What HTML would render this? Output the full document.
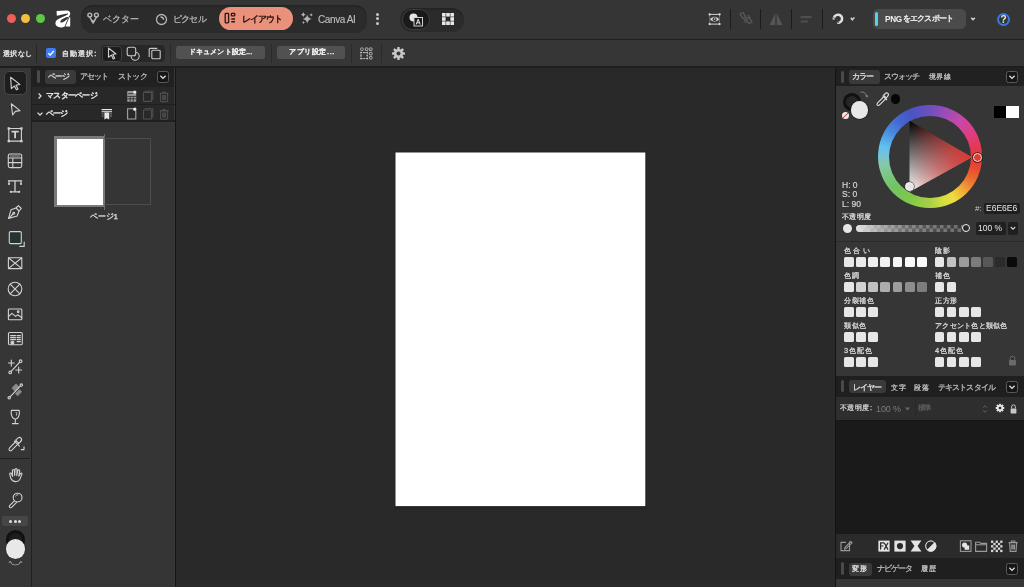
<!DOCTYPE html>
<html lang="ja"><head><meta charset="utf-8">
<style>
*{box-sizing:border-box;margin:0;padding:0}
html,body{width:1024px;height:587px;overflow:hidden;background:#2a2a2a;font-family:"Liberation Sans",sans-serif;color:#d8d8d8}
.a{position:absolute}
.t{position:absolute;white-space:nowrap;line-height:1}
.j{-webkit-text-stroke:0.2px currentColor}
.t{will-change:transform}
</style></head><body>
<!-- top bar -->
<div class="a" style="left:0;top:0;width:1024px;height:39px;background:#353535"></div>
<div class="a" style="left:0;top:39px;width:1024px;height:1px;background:#1f1f1f"></div>
<div class="a" style="left:0;top:40px;width:1024px;height:26px;background:#363636"></div>
<div class="a" style="left:0;top:66px;width:1024px;height:1.6px;background:#1e1e1e"></div>
<!-- traffic -->
<div class="a" style="left:7px;top:14px;width:9px;height:9px;border-radius:50%;background:#ee5f57"></div>
<div class="a" style="left:21px;top:14px;width:9px;height:9px;border-radius:50%;background:#f5bd3f"></div>
<div class="a" style="left:35.5px;top:14px;width:9px;height:9px;border-radius:50%;background:#5fc648"></div>
<!-- logo -->
<svg class="a" style="left:54px;top:8px" width="20" height="22" viewBox="0 0 20 22">
<path fill="#ffffff" fill-rule="evenodd" d="M2.6,3.1 L12.4,2.5 C14.9,2.4 16.5,3.8 16.2,5.8 C16.1,7 15.4,8.2 14.6,9 L10.6,18.4 C9.6,19.1 8.4,19.4 7,19.4 C3.6,19.2 1.4,17.6 1.4,15.2 C1.4,13 3,11.6 5,10.8 C8,9.4 11.6,7.8 13.6,6.6 C14.3,6.1 14.2,5.4 13.4,5.5 C10.4,5.9 6,7 2.8,7.8 Z M6.6,14.4 C5.6,13.4 7.4,11.4 10,10.2 C12,9.2 13.8,8.8 14.2,9.2 C14.4,9.8 12.8,11.8 10.6,13.2 C8.8,14.3 7.2,14.9 6.6,14.4 Z"/>
<path fill="#ffffff" d="M15.4,9.2 L16.2,9.2 L16.2,18.6 L11.4,18.6 Z"/>
</svg>
<!-- mode group -->
<div class="a" style="left:81px;top:5px;width:286px;height:28px;border-radius:12px;background:#2b2b2b;box-shadow:inset 0 1.5px 1px rgba(0,0,0,0.18)"></div>
<svg class="a" style="left:86px;top:11px" width="14" height="14" viewBox="0 0 14 14" fill="none" stroke="#b8b8b8" stroke-width="1.4">
<circle cx="3.8" cy="4" r="1.9"/><circle cx="10.4" cy="4" r="1.9"/>
<path d="M3.6,5.9 L6.2,10.4 M10.6,5.9 L8,10.4"/><path d="M5.4,9.8 H8.8 L7.1,12.6 Z" fill="#b8b8b8" stroke-width="0.9" stroke-linejoin="round"/>
</svg>
<div class="t j" style="left:103px;top:14.7px;font-size:8.5px;color:#b4b4b4;letter-spacing:-0.04px;-webkit-text-stroke:0.25px currentColor">ベクター</div>
<svg class="a" style="left:155px;top:13px" width="13" height="13" viewBox="0 0 13 13" fill="none" stroke="#b4b4b4" stroke-width="1.3">
<circle cx="6.5" cy="6.5" r="5"/><path d="M5.5,4 C7,4 8.5,5 8.5,6.8" stroke-width="1.4"/>
</svg>
<div class="t j" style="left:173px;top:14.7px;font-size:8.5px;color:#b4b4b4;letter-spacing:-0.77px;-webkit-text-stroke:0.25px currentColor">ピクセル</div>
<div class="a" style="left:219px;top:7px;width:74px;height:23px;border-radius:11.5px;background:#e9917b"></div>
<svg class="a" style="left:223px;top:12px" width="14" height="12" viewBox="0 0 14 12" fill="none" stroke="#2a1612" stroke-width="1.3">
<rect x="2.2" y="1.3" width="3.4" height="9.6" rx="0.8"/><rect x="8.4" y="1.3" width="3.4" height="2.6" rx="0.6"/>
<path d="M8.3,7 H12 M8.3,9.8 H12" stroke-width="1.4"/>
</svg>
<div class="t j" style="left:242px;top:14.7px;font-size:8.5px;color:#2a1612;-webkit-text-stroke:0.45px currentColor;letter-spacing:-0.9px">レイアウト</div>
<svg class="a" style="left:296px;top:8px" width="20" height="22" viewBox="0 0 20 22" fill="#b2b2b2"><path d="M11.2,6.6 Q11.991999999999999,10.208 15.6,11 Q11.991999999999999,11.792 11.2,15.4 Q10.408,11.792 6.799999999999999,11 Q10.408,10.208 11.2,6.6 Z"/><path d="M7.3,4.300000000000001 Q7.732,6.268 9.7,6.7 Q7.732,7.132000000000001 7.3,9.1 Q6.867999999999999,7.132000000000001 4.9,6.7 Q6.867999999999999,6.268 7.3,4.300000000000001 Z"/><path d="M15.2,5.2 Q15.505999999999998,6.594 16.9,6.9 Q15.505999999999998,7.206 15.2,8.6 Q14.894,7.206 13.5,6.9 Q14.894,6.594 15.2,5.2 Z"/><path d="M7.5,13.1 Q7.77,14.33 9.0,14.6 Q7.77,14.87 7.5,16.1 Q7.23,14.87 6.0,14.6 Q7.23,14.33 7.5,13.1 Z"/></svg>
<div class="t" style="left:318px;top:14.5px;font-size:10px;color:#bcbcbc;letter-spacing:-0.4px;-webkit-text-stroke:0.15px currentColor">Canva AI</div>
<!-- more dots -->
<div class="a" style="left:376px;top:12.5px;width:3px;height:3px;border-radius:50%;background:#c8c8c8"></div>
<div class="a" style="left:376px;top:17px;width:3px;height:3px;border-radius:50%;background:#c8c8c8"></div>
<div class="a" style="left:376px;top:21.5px;width:3px;height:3px;border-radius:50%;background:#c8c8c8"></div>
<!-- group 2 -->
<div class="a" style="left:400px;top:7.5px;width:64px;height:24px;border-radius:12px;background:#2b2b2b;box-shadow:inset 0 1.5px 1px rgba(0,0,0,0.18)"></div>
<div class="a" style="left:401.5px;top:9px;width:28px;height:21px;border-radius:10.5px;background:#1a1a1a;border:1px solid #3e3e3e"></div>
<svg class="a" style="left:407px;top:11px" width="18" height="18" viewBox="0 0 18 18">
<circle cx="6.5" cy="6.5" r="4" fill="#e6e6e6"/><rect x="7" y="6.5" width="8.5" height="8.5" fill="#1a1a1a" stroke="#cfcfcf" stroke-width="1"/>
<path d="M9.2,13.5 L11.2,8.2 L13.2,13.5 M9.9,11.8 H12.5" fill="none" stroke="#e6e6e6" stroke-width="1"/>
</svg>
<svg class="a" style="left:441px;top:12px" width="14" height="14" viewBox="0 0 14 14" fill="#e8e8e8">
<rect x="1" y="1" width="3.6" height="3.6"/><rect x="5.2" y="1" width="3.6" height="3.6"/><rect x="9.4" y="1" width="3.6" height="3.6"/>
<rect x="1" y="5.2" width="3.6" height="3.6"/><rect x="9.4" y="5.2" width="3.6" height="3.6"/>
<rect x="1" y="9.4" width="3.6" height="3.6"/><rect x="5.2" y="9.4" width="3.6" height="3.6"/><rect x="9.4" y="9.4" width="3.6" height="3.6"/>
</svg>
<!-- right icons -->
<svg class="a" style="left:704px;top:11px" width="18" height="16" viewBox="0 0 18 16" fill="none" stroke="#d4d4d4" stroke-width="1">
<path d="M5.2,3.4 H16 M5.2,13.1 H16"/><path d="M5.7,3.4 V13.1 M15.5,3.4 V13.1" stroke="#7a7a7a" stroke-width="0.8"/>
<g fill="#dcdcdc" stroke="none"><circle cx="5.6" cy="3.4" r="1.1"/><circle cx="15.6" cy="3.4" r="1.1"/><circle cx="5.6" cy="13.1" r="1.1"/><circle cx="15.6" cy="13.1" r="1.1"/></g>
<path d="M5.4,8.2 Q10.6,2.8 15.8,8.2 Q10.6,13.6 5.4,8.2 Z" fill="#dcdcdc" stroke="#363636" stroke-width="0.6"/>
<circle cx="10.6" cy="8.2" r="2" fill="#363636" stroke="none"/><circle cx="10.7" cy="8" r="0.8" fill="#dcdcdc" stroke="none"/>
</svg>
<div class="a" style="left:730px;top:9px;width:1px;height:20px;background:#1c1c1c"></div>
<svg class="a" style="left:738px;top:11px" width="16" height="16" viewBox="0 0 16 16" fill="none" stroke="#5a5a5a" stroke-width="1.3">
<path d="M2,3 L5,1.5 L8,6 L5,7.5 Z"/><path d="M8,8 L11,6.5 L14,11 L11,12.5 Z"/><path d="M6,8 L8,12 M10,4 L12,7"/>
</svg>
<div class="a" style="left:760px;top:9px;width:1px;height:20px;background:#1c1c1c"></div>
<svg class="a" style="left:768px;top:11px" width="16" height="16" viewBox="0 0 16 16" fill="#555">
<path d="M7.3,2 L7.3,14 L1.5,14 Z"/><path d="M8.7,2 L8.7,14 L14.5,14 Z"/>
</svg>
<div class="a" style="left:791px;top:9px;width:1px;height:20px;background:#1c1c1c"></div>
<svg class="a" style="left:799px;top:12px" width="14" height="14" viewBox="0 0 14 14" fill="#4e4e4e"><rect x="1.6" y="4" width="11" height="2.2" rx="0.4"/><rect x="1.6" y="8.4" width="7.4" height="2.2" rx="0.4"/></svg>
<div class="a" style="left:822px;top:9px;width:1px;height:20px;background:#1c1c1c"></div>
<svg class="a" style="left:826px;top:8px" width="20" height="22" viewBox="826 8 20 22" fill="none">
<path d="M834,19.6 A4.1,4.1 0 1 1 837.4,22.8" stroke="#e0e0e0" stroke-width="2.5"/>
<path d="M833.2,17.6 L835.6,18.8 M837.6,20.4 L838.6,23" stroke="#363636" stroke-width="0.8"/>
</svg>
<svg class="a" style="left:849px;top:16px" width="8" height="6" viewBox="0 0 8 6" fill="none" stroke="#d8d8d8" stroke-width="1.4"><path d="M1.8,1.8 L3.4,3.8 L5.4,1.4"/></svg>
<!-- export -->
<div class="a" style="left:873px;top:9px;width:93px;height:20px;border-radius:5px;background:#4b4b4b"></div>
<div class="a" style="left:875px;top:12px;width:3px;height:14px;border-radius:1.5px;background:#4fd6ea"></div>
<div class="t" style="left:884.6px;top:15.6px;font-size:8.2px;color:#f0f0f0;font-weight:bold;letter-spacing:-0.3px">PNG</div><div class="t j" style="left:902.5px;top:15.2px;font-size:8px;letter-spacing:-0.85px;color:#f0f0f0;-webkit-text-stroke:0.35px currentColor">をエクスポート</div>
<svg class="a" style="left:969px;top:16px" width="8" height="6" viewBox="0 0 8 6" fill="none" stroke="#d8d8d8" stroke-width="1.4"><path d="M2.2,1.8 L4,3.8 L5.8,1.8"/></svg>
<div class="a" style="left:996.5px;top:12.5px;width:13.5px;height:13.5px;border-radius:50%;border:2px solid #3b78d8"></div>
<div class="t" style="left:999px;top:14.5px;width:9px;text-align:center;font-size:10px;font-weight:bold;color:#e8e8e8">?</div>

<!-- second bar -->
<div class="t j" style="left:3px;top:50.4px;font-size:7.4px;letter-spacing:0.46px;color:#e2e2e2;-webkit-text-stroke:0.35px currentColor">選択なし</div>
<div class="a" style="left:36px;top:44px;width:1px;height:19px;background:#262626"></div>
<div class="a" style="left:46px;top:48px;width:10.3px;height:10.3px;border-radius:2px;background:#3b7ef2"></div>
<svg class="a" style="left:46px;top:48px" width="10" height="10" viewBox="0 0 10 10" fill="none" stroke="#fff" stroke-width="1.4"><path d="M2.4,5.2 L4.2,7 L7.8,3"/></svg>
<div class="t j" style="left:61.5px;top:50.4px;font-size:7.4px;letter-spacing:1.06px;color:#e2e2e2;-webkit-text-stroke:0.35px currentColor">自動選択:</div>
<div class="a" style="left:101px;top:45px;width:64px;height:17px;border-radius:4px;background:#272727"></div>
<div class="a" style="left:102px;top:45.5px;width:20px;height:16px;border-radius:3.5px;background:#1c1c1c;border:1px solid #444"></div>
<svg class="a" style="left:106px;top:46px" width="13" height="15" viewBox="0 0 13 15" fill="none" stroke="#d0d0d0" stroke-width="1.1" stroke-linejoin="round">
<path d="M2.5,2 L10,8 L6.8,8.3 L8.6,12.2 L7.2,12.9 L5.4,9.1 L2.5,11.2 Z"/>
</svg>
<svg class="a" style="left:126px;top:46px" width="14" height="15" viewBox="0 0 14 15" fill="none" stroke="#c8c8c8" stroke-width="1.1">
<rect x="1.2" y="1.3" width="8.5" height="8.5" rx="2"/><path d="M9.7,6.3 A4,4 0 1 1 5.2,9.8"/>
</svg>
<svg class="a" style="left:147px;top:47px" width="15" height="14" viewBox="0 0 15 14" fill="none" stroke="#c8c8c8" stroke-width="1.1">
<path d="M2.2,10 V2.5 Q2.2,1.4 3.3,1.4 H10.3"/><rect x="4.8" y="3.3" width="8.4" height="8.4" rx="1"/>
</svg>
<div class="a" style="left:170px;top:44px;width:1px;height:19px;background:#2a2a2a"></div><div class="a" style="left:271px;top:44px;width:1px;height:19px;background:#2a2a2a"></div><div class="a" style="left:351px;top:44px;width:1px;height:19px;background:#2a2a2a"></div><div class="a" style="left:381px;top:44px;width:1px;height:19px;background:#2a2a2a"></div>
<div class="a" style="left:176px;top:46px;width:89px;height:13px;border-radius:2.5px;background:#515151"></div>
<div class="t j" style="left:189px;top:48.4px;font-size:7.4px;letter-spacing:0.11px;color:#f2f2f2;-webkit-text-stroke:0.45px currentColor">ドキュメント設定...</div>
<div class="a" style="left:277px;top:46px;width:68px;height:13px;border-radius:2.5px;background:#515151"></div>
<div class="t j" style="left:289px;top:48.4px;font-size:7.4px;letter-spacing:0.6px;color:#f2f2f2;-webkit-text-stroke:0.45px currentColor">アプリ設定...</div>
<svg class="a" style="left:354px;top:42px" width="24" height="22" viewBox="0 0 24 22" fill="none" stroke="#bdbdbd" stroke-width="0.9">
<rect x="6.6" y="5.9" width="2.6" height="2.6" rx="0.8"/><rect x="11.3" y="5.9" width="2.6" height="2.6" rx="0.5"/><rect x="15.4" y="5.9" width="2.6" height="2.6" rx="0.5"/>
<rect x="15.4" y="10.3" width="2.6" height="2.6" rx="0.5"/><rect x="15.4" y="14.4" width="2.6" height="2.6" rx="0.5"/>
<rect x="7" y="10.6" width="6.2" height="6" stroke-dasharray="1.1 0.9"/>
<g fill="#d8d8d8" stroke="none"><circle cx="7" cy="10.6" r="0.8"/><circle cx="13.2" cy="10.6" r="0.8"/><circle cx="7" cy="16.6" r="0.8"/><circle cx="13.2" cy="16.6" r="0.8"/><circle cx="10.1" cy="10.6" r="0.7"/><circle cx="10.1" cy="16.6" r="0.7"/><circle cx="7" cy="13.6" r="0.7"/><circle cx="13.2" cy="13.6" r="0.7"/></g>
</svg>
<svg class="a" style="left:391px;top:46px" width="15" height="15" viewBox="0 0 15 15">
<g fill="#c8c8c8"><circle cx="7.5" cy="7.5" r="4.6"/>
<rect x="6.3" y="1" width="2.4" height="13" rx="0.6"/><rect x="6.3" y="1" width="2.4" height="13" rx="0.6" transform="rotate(45 7.5 7.5)"/>
<rect x="6.3" y="1" width="2.4" height="13" rx="0.6" transform="rotate(90 7.5 7.5)"/><rect x="6.3" y="1" width="2.4" height="13" rx="0.6" transform="rotate(135 7.5 7.5)"/></g>
<circle cx="7.5" cy="7.5" r="2" fill="#363636"/>
</svg>

<!-- tool column -->
<div class="a" style="left:0;top:67.6px;width:31px;height:520px;background:#363636"></div>
<div class="a" style="left:31px;top:67.6px;width:1px;height:520px;background:#202020"></div>
<!-- tools -->
<div class="a" style="left:4px;top:71.3px;width:23.2px;height:24px;border-radius:5px;background:#1e1e1e;border:1px solid #474747"></div>
<svg class="a" style="left:0;top:67px" width="31" height="400" viewBox="0 0 31 400" fill="none" stroke="#d2d2d2" stroke-width="1.1" stroke-linejoin="round" stroke-linecap="round">
<!-- move arrow y~84 -->
<path d="M10.6,10.3 L19.9,17.4 L16,18.2 L18,22 L16.4,22.8 L14.4,19 L11.4,21.6 Z"/>
<!-- node arrow y~109 -->
<path d="M11.3,36.8 L20,43.6 L15.4,44.4 L12.6,48 Z"/>
<!-- T box y~134.5 -->
<rect x="8.8" y="61.5" width="12.6" height="12.6"/>
<path d="M11.5,64.6 H18.7 M15.1,64.6 V71.2" stroke-width="1.8" stroke-linecap="butt"/>
<g fill="#d2d2d2" stroke="none"><rect x="7.6" y="60.3" width="2.4" height="2.4"/><rect x="20.2" y="60.3" width="2.4" height="2.4"/><rect x="7.6" y="72.9" width="2.4" height="2.4"/><rect x="20.2" y="72.9" width="2.4" height="2.4"/></g>
<!-- table y~160 -->
<rect x="8.3" y="87" width="13.4" height="13.6" rx="1.8"/>
<path d="M8.3,91 H21.7 M8.3,95.6 H21.7 M12.8,91 V100.6"/>
<path d="M10.4,89 H19.6" stroke-width="1" stroke="#9a9a9a"/>
<!-- T frame y~186 -->
<path d="M8.4,113.8 H21.6 M15,113.8 V124.6 M11,124.8 H19" stroke-width="1.3"/>
<path d="M9,113.8 V116.4 M21,113.8 V116.4"/>
<g fill="#d2d2d2" stroke="none"><circle cx="9" cy="117" r="1.1"/><circle cx="21" cy="117" r="1.1"/><circle cx="10.8" cy="124.8" r="1.1"/><circle cx="19.2" cy="124.8" r="1.1"/></g>
<!-- pen y~212 -->
<path d="M21.3,141.5 L18.4,138.6 L16,141 L11,142.8 L8.6,151.4 L17.2,149 L19,144 Z"/>
<path d="M8.6,151.4 L13,147 M16,141 L19,144"/>
<circle cx="13.8" cy="146.2" r="0.9"/>
<!-- square y~237 -->
<rect x="9.3" y="164.6" width="12" height="12" rx="1.2" fill="#263335"/>
<path d="M24.2,175 V179.4 H19.8"/>
<!-- x box y~263 -->
<rect x="8.4" y="190.8" width="13.4" height="10.8" rx="0.8"/><path d="M8.4,190.8 L21.8,201.6 M21.8,190.8 L8.4,201.6"/>
<!-- x circle y~288 -->
<circle cx="15" cy="222" r="6.8"/><path d="M10.2,217.2 L19.8,226.8 M19.8,217.2 L10.2,226.8"/>
<!-- image y~314 -->
<rect x="8.4" y="242" width="13.4" height="10.8" rx="0.8"/><path d="M8.4,249.5 L12,246.4 L15.6,249.4 L17.8,247.8 L21.8,250.8"/><circle cx="18.2" cy="244.8" r="0.9"/>
<!-- text frame y~339 -->
<rect x="8.5" y="265.5" width="13.8" height="12.2" rx="1.2"/>
<path d="M10.6,268.6 H15.5 M10.6,270.6 H15.5 M10.6,272.6 H15.5 M17,268.6 H20.4 M17,270.6 H20.4 M17,272.6 H20.4 M17,274.6 H20.4"/>
<circle cx="12.4" cy="275.8" r="1.5" fill="#d2d2d2"/>
<!-- node plus y~366 -->
<path d="M8.4,296 H14.2 M11.3,293.1 V298.9 M15.8,303 H21.6 M18.7,300.1 V305.9 M10.9,304.6 L19.9,295"/>
<circle cx="10.2" cy="305.4" r="1.3" fill="#363636"/><circle cx="20.6" cy="294.2" r="1.3" fill="#363636"/>
<!-- gradient y~391 -->
<path d="M11.5,321 L16,316.4 L19.4,319.8 L15,324.4 Z M15,326.6 L19.4,322.2 L22,324.8 L17.6,329.2 Z" fill="#8a8a8a" stroke="none"/>
<path d="M9.3,330.7 L21,318.4"/><circle cx="9.2" cy="330.8" r="1.2" fill="#363636"/><circle cx="21.3" cy="318.1" r="1.2" fill="#363636"/>
</svg>
<svg class="a" style="left:0;top:400px" width="31" height="187" viewBox="0 0 31 187" fill="none" stroke="#d2d2d2" stroke-width="1.1" stroke-linejoin="round" stroke-linecap="round">
<!-- glass y~417 -->
<path d="M11.4,10.4 H19.2 Q20,15.6 17.6,18 Q16.4,19 15.3,19 Q14.2,19 13,18 Q10.6,15.6 11.4,10.4 Z M15.3,19 V23.6 M12.4,23.6 H18.2"/>
<path d="M16.2,12.2 Q17.6,13.2 16.6,15.2" stroke-width="0.9"/>
<!-- eyedropper y~443 -->
<path d="M17,38.8 Q19.2,36.4 21,38 Q22.6,39.8 20.2,42 L18.8,43.4 L15.6,40.2 Z"/>
<path d="M16.4,41 L9.6,47.8 Q8.4,49.4 9.4,50.3 Q10.4,51.2 11.8,50.2 L18.6,43.4"/>
<path d="M14.4,41.2 L19.4,46.2"/>
<path d="M24,46.8 V49.6 H21.2"/>
<!-- hand y~474 -->
<path d="M11,78.8 L9.8,74.6 Q9.4,73.4 10.4,73.1 Q11.3,72.9 11.7,74 L12.6,76.4 L12.4,70.6 Q12.4,69.5 13.4,69.5 Q14.3,69.5 14.4,70.6 L14.7,75.4 L15,69.6 Q15.1,68.5 16.1,68.5 Q17.1,68.6 17,69.7 L16.8,75.6 L17.8,70.6 Q18.1,69.6 19,69.8 Q19.9,70 19.7,71.1 L18.8,76.2 L20.4,73.6 Q21,72.8 21.6,73.2 Q22.3,73.7 21.8,74.6 L19.8,79.4 Q18.6,81.6 15.6,81.6 Q12.4,81.6 11,78.8 Z"/>
<!-- zoom y~499 -->
<circle cx="17.6" cy="97.6" r="4.4"/><path d="M14.4,100.8 L9.6,105.6 Q8.8,106.6 9.7,107.4 Q10.6,108.2 11.6,107.4 L16.4,102.6"/>
<path d="M15.6,96 Q16.4,94.8 17.8,94.8" stroke-width="0.9"/>
</svg>
<div class="a" style="left:0;top:458px;width:30px;height:1px;background:#202020"></div>
<div class="a" style="left:2px;top:516px;width:26px;height:10px;border-radius:2px;background:#464646"></div>
<div class="a" style="left:9.3px;top:519.8px;width:3px;height:3px;border-radius:50%;background:#dedede"></div>
<div class="a" style="left:13.7px;top:519.8px;width:3px;height:3px;border-radius:50%;background:#dedede"></div>
<div class="a" style="left:18px;top:519.8px;width:3px;height:3px;border-radius:50%;background:#dedede"></div>
<div class="a" style="left:5.5px;top:530px;width:19.5px;height:19.5px;border-radius:50%;background:#1d1d1d;border:3.5px solid #111"></div>
<div class="a" style="left:5.5px;top:539px;width:19.5px;height:19.5px;border-radius:50%;background:#e8e8e8;box-shadow:0 0 1px #000"></div>
<svg class="a" style="left:8px;top:560px" width="15" height="7" viewBox="0 0 15 7" fill="none" stroke="#9a9a9a" stroke-width="0.9"><path d="M2,1.5 Q3,5 7.5,5 Q12,5 13,1.5 M1,3 L2,1.2 L3.4,2.6 M11.6,2.6 L13,1.2 L14,3"/></svg>

<!-- left panel -->
<div class="a" style="left:32px;top:67.6px;width:143px;height:520px;background:#353535"></div>
<div class="a" style="left:32px;top:67.6px;width:143px;height:19.4px;background:#212121"></div>
<div class="a" style="left:32px;top:87px;width:143px;height:34px;background:#282828"></div>
<div class="a" style="left:174px;top:67.6px;width:1px;height:520px;background:#393939"></div><div class="a" style="left:175px;top:67.6px;width:1px;height:520px;background:#151515"></div>
<!-- left panel content -->
<div class="a" style="left:37px;top:70px;width:3px;height:13px;border-radius:1.5px;background:#4a4a4a"></div>
<div class="a" style="left:44.5px;top:69.5px;width:31px;height:14px;border-radius:3px;background:#3a3a3a"></div>
<div class="t j" style="left:48px;top:72.5px;font-size:8px;letter-spacing:-1px;color:#e0e0e0;-webkit-text-stroke:0.25px currentColor">ページ</div>
<div class="t j" style="left:79.5px;top:72.5px;font-size:8px;letter-spacing:-1.04px;color:#bdbdbd;-webkit-text-stroke:0.25px currentColor">アセット</div>
<div class="t j" style="left:117.5px;top:72.5px;font-size:8px;letter-spacing:-0.8px;color:#bdbdbd;-webkit-text-stroke:0.25px currentColor">ストック</div>
<div class="a" style="left:157px;top:71px;width:11.5px;height:11.5px;border-radius:2.5px;background:#161616;border:1px solid #5a5a5a"></div>
<svg class="a" style="left:157px;top:71px" width="12" height="12" viewBox="0 0 12 12" fill="none" stroke="#e0e0e0" stroke-width="1.3"><path d="M3.4,4.8 L6,7.4 L8.6,4.8"/></svg>
<div class="a" style="left:32px;top:104px;width:143px;height:1px;background:#1f1f1f"></div>
<div class="a" style="left:32px;top:120px;width:143px;height:1.5px;background:#1f1f1f"></div>
<svg class="a" style="left:36px;top:92px" width="8" height="8" viewBox="0 0 8 8" fill="none" stroke="#d8d8d8" stroke-width="1.3"><path d="M2.6,1.5 L5,4 L2.6,6.5"/></svg>
<div class="t j" style="left:46px;top:91.5px;font-size:8px;letter-spacing:-0.73px;color:#e4e4e4;-webkit-text-stroke:0.45px currentColor">マスターページ</div>
<svg class="a" style="left:36px;top:110px" width="8" height="8" viewBox="0 0 8 8" fill="none" stroke="#d8d8d8" stroke-width="1.3"><path d="M1.5,2.6 L4,5 L6.5,2.6"/></svg>
<div class="t j" style="left:46px;top:109.5px;font-size:8px;letter-spacing:-0.9px;color:#e4e4e4;-webkit-text-stroke:0.45px currentColor">ページ</div>
<svg class="a" style="left:125px;top:89px" width="48" height="32" viewBox="0 0 48 32">
<rect x="2.2" y="2" width="9" height="10.8" rx="0.8" fill="#9a9a9a"/><path d="M3.2,4.6 H8.4 M2.2,7.4 H11.2 M2.2,9.8 H11.2 M5.2,7.4 V12.8 M8.2,7.4 V12.8" fill="none" stroke="#2a2a2a" stroke-width="0.8"/>
<circle cx="9.8" cy="3" r="1.6" fill="#e8e8e8"/>
<g fill="none" stroke="#4e4e4e" stroke-width="1.1"><rect x="18.5" y="3.4" width="8" height="9" rx="0.6"/><path d="M19.5,2.2 H27.8 V11.2"/></g>
<g fill="none" stroke="#4e4e4e" stroke-width="1.1"><rect x="35.6" y="4.2" width="7" height="8.4" rx="0.6"/><path d="M34.6,4.2 H43.6 M37.6,3 H40.6 M37.8,6 V11 M39.1,6 V11 M40.4,6 V11"/></g>
<g fill="none" stroke="#a6a6a6" stroke-width="1.1"><path d="M2.6,19.8 H8.4 L10.8,22.2 V30 H2.6 Z"/></g>
<circle cx="9.8" cy="20.2" r="1.6" fill="#e8e8e8"/>
<g fill="none" stroke="#4e4e4e" stroke-width="1.1"><rect x="18.5" y="21" width="8" height="9" rx="0.6"/><path d="M19.5,19.8 H27.8 V28.8"/></g>
<g fill="none" stroke="#4e4e4e" stroke-width="1.1"><rect x="35.6" y="21.8" width="7" height="8.4" rx="0.6"/><path d="M34.6,21.8 H43.6 M37.6,20.6 H40.6 M37.8,23.6 V28.6 M39.1,23.6 V28.6 M40.4,23.6 V28.6"/></g>
</svg>
<svg class="a" style="left:100px;top:107px" width="14" height="14" viewBox="0 0 14 14" fill="#e8e8e8">
<rect x="1.6" y="2" width="10.4" height="1.2"/><rect x="1.6" y="4.2" width="10.4" height="1"/>
<rect x="1.6" y="6.4" width="2" height="1" fill="#888"/><rect x="10" y="6.4" width="2" height="1" fill="#888"/><rect x="1.6" y="8.6" width="2" height="1" fill="#888"/><rect x="10" y="8.6" width="2" height="1" fill="#888"/>
<path d="M4.4,5.6 H9.2 V12.4 L6.8,11.2 L4.4,12.4 Z"/>
</svg>
<!-- page thumb -->
<div class="a" style="left:54px;top:136px;width:51px;height:71px;background:#7a7a7a"></div>
<div class="a" style="left:57px;top:138.5px;width:46px;height:66px;background:#ffffff"></div>
<div class="a" style="left:104px;top:138px;width:47px;height:67px;border:1px solid #4c4c4c;border-left:none"></div>
<div class="a" style="left:103.5px;top:134px;width:1px;height:4px;background:#6a6a6a"></div>
<div class="a" style="left:103.5px;top:206px;width:1px;height:4px;background:#6a6a6a"></div>
<div class="t j" style="left:90px;top:213px;font-size:8px;letter-spacing:-0.19px;color:#e4e4e4;-webkit-text-stroke:0.25px currentColor">ページ1</div>

<!-- canvas -->
<div class="a" style="left:176px;top:67.6px;width:659px;height:520px;background:#292929"></div>
<svg class="a" style="left:380px;top:140px" width="280" height="380" viewBox="380 140 280 380"><rect x="394.3" y="151.3" width="252.2" height="358" fill="#242424"/><rect x="395.5" y="152.5" width="249.8" height="353.6" fill="#ffffff"/></svg>
<!-- right panel -->
<div class="a" style="left:835px;top:67.6px;width:1px;height:520px;background:#141414"></div>
<div class="a" style="left:836px;top:67.6px;width:188px;height:520px;background:#363636"></div>
<div class="a" style="left:836px;top:67.6px;width:188px;height:18.6px;background:#212121"></div>
<div class="a" style="left:836px;top:376px;width:188px;height:21px;background:#1f1f1f"></div>
<div class="a" style="left:836px;top:397px;width:188px;height:23px;background:#2e2e2e"></div>
<div class="a" style="left:836px;top:420px;width:188px;height:114px;background:#1a1a1a;border-top:1px solid #161616"></div>
<div class="a" style="left:836px;top:534px;width:188px;height:24px;background:#2b2b2b"></div>
<div class="a" style="left:836px;top:558px;width:188px;height:21px;background:#1f1f1f"></div>
<!-- right panel content -->
<div class="a" style="left:841px;top:70.5px;width:3px;height:12px;border-radius:1.5px;background:#4a4a4a"></div>
<div class="a" style="left:848.5px;top:70px;width:31px;height:13.5px;border-radius:3px;background:#3a3a3a"></div>
<div class="t j" style="left:852px;top:73px;font-size:8px;letter-spacing:-0.91px;color:#e4e4e4;-webkit-text-stroke:0.25px currentColor">カラー</div>
<div class="t j" style="left:884px;top:73px;font-size:8px;letter-spacing:-0.9px;color:#bdbdbd;-webkit-text-stroke:0.25px currentColor">スウォッチ</div>
<div class="t j" style="left:928.5px;top:73.4px;font-size:7.4px;letter-spacing:0.45px;color:#bdbdbd;-webkit-text-stroke:0.3px currentColor">境界線</div>
<div class="a" style="left:1006px;top:71px;width:11.5px;height:11.5px;border-radius:2.5px;background:#161616;border:1px solid #5a5a5a"></div>
<svg class="a" style="left:1006px;top:71px" width="12" height="12" viewBox="0 0 12 12" fill="none" stroke="#e0e0e0" stroke-width="1.3"><path d="M3.4,4.8 L6,7.4 L8.6,4.8"/></svg>
<!-- stroke/fill circles -->
<div class="a" style="left:843px;top:93px;width:17.5px;height:17.5px;border-radius:50%;background:#262626;border:3.2px solid #111"></div>
<div class="a" style="left:850.5px;top:101px;width:17.5px;height:17.5px;border-radius:50%;background:#e8e8e8;box-shadow:0 0 0 0.8px #1e1e1e"></div>
<svg class="a" style="left:859px;top:90px" width="10" height="10" viewBox="0 0 10 10" fill="none" stroke="#8a8a8a" stroke-width="0.9"><path d="M1.5,2 Q6.5,1.5 8,6.5 M6.4,5.6 L8,7.2 L9,5.4"/></svg>
<div class="a" style="left:841.5px;top:112px;width:7px;height:7px;border-radius:50%;background:#eee;overflow:hidden"><div style="position:absolute;left:3px;top:-2px;width:1.2px;height:11px;background:#e0474c;transform:rotate(45deg)"></div></div>
<svg class="a" style="left:874px;top:91px" width="16" height="16" viewBox="0 0 16 16" fill="none" stroke="#d8d8d8" stroke-width="1.1" stroke-linejoin="round">
<path d="M10.8,3 Q12.6,1.2 14,2.4 Q15.2,3.8 13.4,5.6 L12.2,6.8 L9.6,4.2 Z"/>
<path d="M10.4,5 L3.6,11.8 Q2.4,13.4 3.2,14.2 Q4,15 5.6,13.8 L12.4,7"/>
<path d="M8.6,4.6 L13,9"/>
</svg>
<div class="a" style="left:890.5px;top:94px;width:9.5px;height:9.5px;border-radius:50%;background:#050505"></div>
<div class="a" style="left:994px;top:105.5px;width:12px;height:12px;background:#000"></div>
<div class="a" style="left:1006px;top:105.5px;width:12.5px;height:12px;background:#fff"></div>
<!-- color wheel -->
<div class="a" style="left:878.4px;top:104.9px;width:103.6px;height:103.6px;border-radius:50%;background:conic-gradient(from 90deg,#e63636,#e94a30 15deg,#ec7030 30deg,#f0a838 45deg,#eedc40 60deg,#d8e040 72deg,#a8d048 90deg,#80c848 115deg,#70c460 140deg,#86c8a8 170deg,#78c4d4 180deg,#60c0f0 192deg,#4890e0 210deg,#4468d0 228deg,#4a54c4 245deg,#6a50c0 268deg,#9a4cb8 290deg,#c848a8 310deg,#e03c78 335deg,#e63636 360deg)"></div>
<div class="a" style="left:889px;top:115.5px;width:82.4px;height:82.4px;border-radius:50%;background:#363636"></div>
<svg class="a" style="left:900px;top:115px" width="80" height="84" viewBox="900 115 80 84">
<defs>
<linearGradient id="gr" x1="909.5" y1="156.4" x2="971.8" y2="157.2" gradientUnits="userSpaceOnUse"><stop offset="0" stop-color="#e03430" stop-opacity="0"/><stop offset="1" stop-color="#e03430" stop-opacity="1"/></linearGradient>
<linearGradient id="gbw" x1="0" y1="120.8" x2="0" y2="192" gradientUnits="userSpaceOnUse"><stop offset="0" stop-color="#000"/><stop offset="1" stop-color="#fff"/></linearGradient>
</defs>
<path d="M909.5,120.8 L971.8,157.2 L909.5,192 Z" fill="url(#gbw)"/>
<path d="M909.5,120.8 L971.8,157.2 L909.5,192 Z" fill="url(#gr)"/>
</svg>
<div class="a" style="left:972.8px;top:152.8px;width:8.8px;height:8.8px;border-radius:50%;background:#e43a2e;border:1.2px solid #eeeeee;box-shadow:0 0 0 0.8px #1a1a1a"></div>
<div class="a" style="left:904.8px;top:181.5px;width:9px;height:9px;border-radius:50%;background:#e6e6e6;border:1.2px solid #fafafa;box-shadow:0 0 0 0.6px #333"></div>
<div class="t" style="left:841.5px;top:181px;font-size:8.5px;color:#d4d4d4;-webkit-text-stroke:0.2px currentColor">H: 0</div>
<div class="t" style="left:841.5px;top:190px;font-size:8.5px;color:#d4d4d4;-webkit-text-stroke:0.2px currentColor">S: 0</div>
<div class="t" style="left:841.5px;top:199.5px;font-size:8.5px;color:#d4d4d4;-webkit-text-stroke:0.2px currentColor">L: 90</div>
<div class="t" style="left:975px;top:204.5px;font-size:8px;color:#c8c8c8">#:</div>
<div class="a" style="left:984px;top:202.5px;width:36px;height:11.5px;border-radius:2px;background:#1f1f1f"></div>
<div class="t" style="left:986px;top:204px;font-size:8.5px;color:#e8e8e8">E6E6E6</div>
<div class="t j" style="left:842px;top:212.9px;font-size:7.4px;letter-spacing:0.46px;color:#d8d8d8;-webkit-text-stroke:0.3px currentColor">不透明度</div>
<div class="a" style="left:843px;top:223.5px;width:9px;height:9px;border-radius:50%;background:#e6e6e6"></div>
<svg class="a" style="left:856px;top:224.5px" width="112" height="7" viewBox="0 0 112 7">
<defs><pattern id="ck" width="7" height="7" patternUnits="userSpaceOnUse"><rect width="7" height="7" fill="#363636"/><rect width="3.5" height="3.5" fill="#6c6c6c"/><rect x="3.5" y="3.5" width="3.5" height="3.5" fill="#6c6c6c"/></pattern>
<linearGradient id="sg" x1="0" x2="1"><stop offset="0" stop-color="#ececec" stop-opacity="0.95"/><stop offset="0.45" stop-color="#c8c8c8" stop-opacity="0.35"/><stop offset="1" stop-color="#a0a0a0" stop-opacity="0"/></linearGradient>
<clipPath id="sc"><rect width="112" height="7" rx="3.5"/></clipPath></defs>
<g clip-path="url(#sc)"><rect width="112" height="7" fill="url(#ck)"/><rect width="112" height="7" fill="url(#sg)"/></g>
</svg>
<div class="a" style="left:962px;top:224px;width:8px;height:8px;border-radius:50%;border:1.3px solid #f0f0f0;background:#2a2a2a"></div>
<div class="a" style="left:976px;top:221.5px;width:30px;height:13px;border-radius:2px;background:#1f1f1f"></div>
<div class="t" style="left:977.5px;top:224px;font-size:8.5px;color:#e8e8e8">100 %</div>
<div class="a" style="left:1008px;top:221.5px;width:10px;height:13px;border-radius:2px;background:#1f1f1f"></div>
<svg class="a" style="left:1009px;top:224px" width="8" height="8" viewBox="0 0 8 8" fill="none" stroke="#d0d0d0" stroke-width="1.1"><path d="M1.8,3 L4,5.2 L6.2,3"/></svg>
<div class="a" style="left:836px;top:240.5px;width:188px;height:1px;background:#2a2a2a"></div>

<!-- swatches -->
<div class="t j" style="left:844px;top:246.9px;font-size:7.4px;letter-spacing:2.45px;color:#d4d4d4;-webkit-text-stroke:0.3px currentColor">色合い</div>
<div class="a" style="left:844.00px;top:256.8px;width:9.8px;height:9.8px;border-radius:1.6px;background:#e6e6e6"></div>
<div class="a" style="left:856.15px;top:256.8px;width:9.8px;height:9.8px;border-radius:1.6px;background:#eaeaea"></div>
<div class="a" style="left:868.30px;top:256.8px;width:9.8px;height:9.8px;border-radius:1.6px;background:#eeeeee"></div>
<div class="a" style="left:880.45px;top:256.8px;width:9.8px;height:9.8px;border-radius:1.6px;background:#f1f1f1"></div>
<div class="a" style="left:892.60px;top:256.8px;width:9.8px;height:9.8px;border-radius:1.6px;background:#f5f5f5"></div>
<div class="a" style="left:904.75px;top:256.8px;width:9.8px;height:9.8px;border-radius:1.6px;background:#f9f9f9"></div>
<div class="a" style="left:916.90px;top:256.8px;width:9.8px;height:9.8px;border-radius:1.6px;background:#fcfcfc"></div>
<div class="t j" style="left:934.5px;top:246.9px;font-size:7.4px;letter-spacing:1.09px;color:#d4d4d4;-webkit-text-stroke:0.3px currentColor">陰影</div>
<div class="a" style="left:934.50px;top:256.8px;width:9.8px;height:9.8px;border-radius:1.6px;background:#e6e6e6"></div>
<div class="a" style="left:946.65px;top:256.8px;width:9.8px;height:9.8px;border-radius:1.6px;background:#c2c2c2"></div>
<div class="a" style="left:958.80px;top:256.8px;width:9.8px;height:9.8px;border-radius:1.6px;background:#9c9c9c"></div>
<div class="a" style="left:970.95px;top:256.8px;width:9.8px;height:9.8px;border-radius:1.6px;background:#7c7c7c"></div>
<div class="a" style="left:983.10px;top:256.8px;width:9.8px;height:9.8px;border-radius:1.6px;background:#575757"></div>
<div class="a" style="left:995.25px;top:256.8px;width:9.8px;height:9.8px;border-radius:1.6px;background:#2b2b2b"></div>
<div class="a" style="left:1007.40px;top:256.8px;width:9.8px;height:9.8px;border-radius:1.6px;background:#0a0a0a"></div>
<div class="t j" style="left:844px;top:271.9px;font-size:7.4px;letter-spacing:1.09px;color:#d4d4d4;-webkit-text-stroke:0.3px currentColor">色調</div>
<div class="a" style="left:844.00px;top:281.8px;width:9.8px;height:9.8px;border-radius:1.6px;background:#e6e6e6"></div>
<div class="a" style="left:856.15px;top:281.8px;width:9.8px;height:9.8px;border-radius:1.6px;background:#d2d2d2"></div>
<div class="a" style="left:868.30px;top:281.8px;width:9.8px;height:9.8px;border-radius:1.6px;background:#c0c0c0"></div>
<div class="a" style="left:880.45px;top:281.8px;width:9.8px;height:9.8px;border-radius:1.6px;background:#adadad"></div>
<div class="a" style="left:892.60px;top:281.8px;width:9.8px;height:9.8px;border-radius:1.6px;background:#9d9d9d"></div>
<div class="a" style="left:904.75px;top:281.8px;width:9.8px;height:9.8px;border-radius:1.6px;background:#8d8d8d"></div>
<div class="a" style="left:916.90px;top:281.8px;width:9.8px;height:9.8px;border-radius:1.6px;background:#7d7d7d"></div>
<div class="t j" style="left:934.5px;top:271.9px;font-size:7.4px;letter-spacing:1.09px;color:#d4d4d4;-webkit-text-stroke:0.3px currentColor">補色</div>
<div class="a" style="left:934.50px;top:281.8px;width:9.8px;height:9.8px;border-radius:1.6px;background:#e6e6e6"></div>
<div class="a" style="left:946.65px;top:281.8px;width:9.8px;height:9.8px;border-radius:1.6px;background:#e6e6e6"></div>
<div class="t j" style="left:844px;top:296.9px;font-size:7.4px;letter-spacing:0.5px;color:#d4d4d4;-webkit-text-stroke:0.3px currentColor">分裂補色</div>
<div class="a" style="left:844.00px;top:306.8px;width:9.8px;height:9.8px;border-radius:1.6px;background:#e6e6e6"></div>
<div class="a" style="left:856.15px;top:306.8px;width:9.8px;height:9.8px;border-radius:1.6px;background:#e6e6e6"></div>
<div class="a" style="left:868.30px;top:306.8px;width:9.8px;height:9.8px;border-radius:1.6px;background:#e6e6e6"></div>
<div class="t j" style="left:934.5px;top:296.9px;font-size:7.4px;letter-spacing:0.65px;color:#d4d4d4;-webkit-text-stroke:0.3px currentColor">正方形</div>
<div class="a" style="left:934.50px;top:306.8px;width:9.8px;height:9.8px;border-radius:1.6px;background:#e6e6e6"></div>
<div class="a" style="left:946.65px;top:306.8px;width:9.8px;height:9.8px;border-radius:1.6px;background:#e6e6e6"></div>
<div class="a" style="left:958.80px;top:306.8px;width:9.8px;height:9.8px;border-radius:1.6px;background:#e6e6e6"></div>
<div class="a" style="left:970.95px;top:306.8px;width:9.8px;height:9.8px;border-radius:1.6px;background:#e6e6e6"></div>
<div class="t j" style="left:844px;top:321.9px;font-size:7.4px;letter-spacing:0.65px;color:#d4d4d4;-webkit-text-stroke:0.3px currentColor">類似色</div>
<div class="a" style="left:844.00px;top:331.8px;width:9.8px;height:9.8px;border-radius:1.6px;background:#e6e6e6"></div>
<div class="a" style="left:856.15px;top:331.8px;width:9.8px;height:9.8px;border-radius:1.6px;background:#e6e6e6"></div>
<div class="a" style="left:868.30px;top:331.8px;width:9.8px;height:9.8px;border-radius:1.6px;background:#e6e6e6"></div>
<div class="t j" style="left:934.5px;top:321.9px;font-size:7.4px;letter-spacing:0.26px;color:#d4d4d4;-webkit-text-stroke:0.3px currentColor">アクセント色と類似色</div>
<div class="a" style="left:934.50px;top:331.8px;width:9.8px;height:9.8px;border-radius:1.6px;background:#e6e6e6"></div>
<div class="a" style="left:946.65px;top:331.8px;width:9.8px;height:9.8px;border-radius:1.6px;background:#e6e6e6"></div>
<div class="a" style="left:958.80px;top:331.8px;width:9.8px;height:9.8px;border-radius:1.6px;background:#e6e6e6"></div>
<div class="a" style="left:970.95px;top:331.8px;width:9.8px;height:9.8px;border-radius:1.6px;background:#e6e6e6"></div>
<div class="t j" style="left:844px;top:346.9px;font-size:7.4px;letter-spacing:1.06px;color:#d4d4d4;-webkit-text-stroke:0.3px currentColor">3色配色</div>
<div class="a" style="left:844.00px;top:356.8px;width:9.8px;height:9.8px;border-radius:1.6px;background:#e6e6e6"></div>
<div class="a" style="left:856.15px;top:356.8px;width:9.8px;height:9.8px;border-radius:1.6px;background:#e6e6e6"></div>
<div class="a" style="left:868.30px;top:356.8px;width:9.8px;height:9.8px;border-radius:1.6px;background:#e6e6e6"></div>
<div class="t j" style="left:934.5px;top:346.9px;font-size:7.4px;letter-spacing:1.06px;color:#d4d4d4;-webkit-text-stroke:0.3px currentColor">4色配色</div>
<div class="a" style="left:934.50px;top:356.8px;width:9.8px;height:9.8px;border-radius:1.6px;background:#e6e6e6"></div>
<div class="a" style="left:946.65px;top:356.8px;width:9.8px;height:9.8px;border-radius:1.6px;background:#e6e6e6"></div>
<div class="a" style="left:958.80px;top:356.8px;width:9.8px;height:9.8px;border-radius:1.6px;background:#e6e6e6"></div>
<div class="a" style="left:970.95px;top:356.8px;width:9.8px;height:9.8px;border-radius:1.6px;background:#e6e6e6"></div>
<svg class="a" style="left:1008px;top:355px" width="9" height="11" viewBox="0 0 9 11"><path d="M2.2,5 V3.4 A2.3,2.3 0 0 1 6.8,3.4 V5" fill="none" stroke="#6a6a6a" stroke-width="1"/><rect x="1" y="5" width="7" height="5.4" rx="0.8" fill="#6a6a6a"/></svg>
<!-- layers panel -->
<div class="a" style="left:841px;top:380px;width:3px;height:12px;border-radius:1.5px;background:#4a4a4a"></div>
<div class="a" style="left:849px;top:380px;width:37px;height:13px;border-radius:3px;background:#3a3a3a"></div>
<div class="t j" style="left:852.5px;top:383.5px;font-size:8px;letter-spacing:-0.97px;color:#e4e4e4;-webkit-text-stroke:0.25px currentColor">レイヤー</div>
<div class="t j" style="left:890.5px;top:383.9px;font-size:7.4px;letter-spacing:1.0px;color:#bdbdbd;-webkit-text-stroke:0.3px currentColor">文字</div>
<div class="t j" style="left:914px;top:383.9px;font-size:7.4px;letter-spacing:1.29px;color:#bdbdbd;-webkit-text-stroke:0.3px currentColor">段落</div>
<div class="t j" style="left:938px;top:383.5px;font-size:8px;letter-spacing:-0.89px;color:#bdbdbd;-webkit-text-stroke:0.25px currentColor">テキストスタイル</div>
<div class="a" style="left:1006px;top:381px;width:11.5px;height:11.5px;border-radius:2.5px;background:#161616;border:1px solid #5a5a5a"></div>
<svg class="a" style="left:1006px;top:381px" width="12" height="12" viewBox="0 0 12 12" fill="none" stroke="#e0e0e0" stroke-width="1.3"><path d="M3.4,4.8 L6,7.4 L8.6,4.8"/></svg>
<div class="t j" style="left:839.5px;top:404.4px;font-size:7.4px;letter-spacing:0.48px;color:#d4d4d4;-webkit-text-stroke:0.25px currentColor">不透明度:</div>
<div class="t" style="left:875.5px;top:404.5px;font-size:9px;color:#7c7c7c;letter-spacing:-0.1px">100 %</div>
<svg class="a" style="left:904px;top:406px" width="7" height="6" viewBox="0 0 7 6" fill="#6a6a6a"><path d="M1,1.5 H6 L3.5,4.5 Z"/></svg>
<div class="a" style="left:915px;top:398px;width:1px;height:20px;background:#282828"></div>
<div class="t j" style="left:918px;top:404.4px;font-size:7.4px;letter-spacing:-0.6px;color:#5a5a5a;-webkit-text-stroke:0.3px currentColor">標準</div>
<svg class="a" style="left:982px;top:403.5px" width="6" height="10" viewBox="0 0 6 10" fill="none" stroke="#6a6a6a" stroke-width="0.9"><path d="M1.2,3.6 L3,1.8 L4.8,3.6 M1.2,6.4 L3,8.2 L4.8,6.4"/></svg>
<svg class="a" style="left:994.5px;top:403px" width="10" height="10" viewBox="0 0 15 15">
<g fill="#e4e4e4"><circle cx="7.5" cy="7.5" r="4.6"/>
<rect x="6.1" y="1" width="2.8" height="13" rx="0.6"/><rect x="6.1" y="1" width="2.8" height="13" rx="0.6" transform="rotate(45 7.5 7.5)"/>
<rect x="6.1" y="1" width="2.8" height="13" rx="0.6" transform="rotate(90 7.5 7.5)"/><rect x="6.1" y="1" width="2.8" height="13" rx="0.6" transform="rotate(135 7.5 7.5)"/></g>
<circle cx="7.5" cy="7.5" r="2" fill="#2b2b2b"/>
</svg>
<svg class="a" style="left:1009px;top:403px" width="9" height="12" viewBox="0 0 9 12"><path d="M2.6,5.4 V3.8 A1.9,1.9 0 0 1 6.4,3.8 V5.4" fill="none" stroke="#c8c8c8" stroke-width="1"/><rect x="1.6" y="5.4" width="5.8" height="5" rx="0.6" fill="#c8c8c8"/></svg>
<!-- footer icons -->
<svg class="a" style="left:836px;top:534px" width="188" height="24" viewBox="836 534 188 24">
<g fill="none" stroke="#9a9a9a" stroke-width="1.1"><path d="M849.5,541.4 V550.6 H841 V542.4 H846"/><path d="M845,547.4 L850.8,541.6 L852,542.8 L846.2,548.6 L844.6,549 Z"/></g>
<rect x="878.4" y="540.6" width="11.2" height="11" fill="#e4e4e4"/>
<path d="M880.6,549.6 V542.8 H884 M880.6,546 H883.4 M884.2,542.8 L888,549.6 M888,542.8 L884.2,549.6" fill="none" stroke="#2b2b2b" stroke-width="1.2"/>
<rect x="894.4" y="540.6" width="11.2" height="11" fill="#e4e4e4"/><circle cx="900" cy="546.1" r="3.1" fill="#2b2b2b"/>
<path d="M910.6,540.6 H921.4 L917.6,546.1 L921.4,551.6 H910.6 L914.4,546.1 Z" fill="#e4e4e4"/>
<circle cx="930.8" cy="546.1" r="5.6" fill="#e4e4e4"/><path d="M934.8,542.1 A5.6,5.6 0 0 0 926.8,550.1 Z" fill="#2b2b2b"/><circle cx="930.8" cy="546.1" r="5.1" fill="none" stroke="#e4e4e4" stroke-width="1"/>
<g fill="none" stroke="#9a9a9a" stroke-width="1.1"><rect x="960.4" y="540.8" width="10.6" height="10.6"/></g>
<circle cx="964.6" cy="545" r="2.6" fill="#e4e4e4"/><rect x="964.6" y="545.4" width="4.6" height="4.4" fill="#e4e4e4"/>
<path d="M975.6,542.2 H979.6 L980.8,543.4 H986.6 V551.4 H975.6 Z M975.6,544.8 H986.6" fill="none" stroke="#9a9a9a" stroke-width="1.1"/>
<g fill="#d8d8d8">
<rect x="991" y="540.6" width="2.3" height="2.3"/><rect x="995.6" y="540.6" width="2.3" height="2.3"/><rect x="1000.2" y="540.6" width="2.3" height="2.3"/>
<rect x="993.3" y="542.9" width="2.3" height="2.3"/><rect x="997.9" y="542.9" width="2.3" height="2.3"/>
<rect x="991" y="545.2" width="2.3" height="2.3"/><rect x="995.6" y="545.2" width="2.3" height="2.3"/><rect x="1000.2" y="545.2" width="2.3" height="2.3"/>
<rect x="993.3" y="547.5" width="2.3" height="2.3"/><rect x="997.9" y="547.5" width="2.3" height="2.3"/>
<rect x="991" y="549.8" width="2.3" height="2.3"/><rect x="995.6" y="549.8" width="2.3" height="2.3"/><rect x="1000.2" y="549.8" width="2.3" height="2.3"/>
</g>
<g fill="none" stroke="#9a9a9a" stroke-width="1.1"><path d="M1008.6,542.6 H1017.6 M1011.4,542.6 V541 H1014.8 V542.6 M1009.6,542.6 L1010.2,551.4 H1016 L1016.6,542.6 M1011.8,544.6 V549.6 M1013.1,544.6 V549.6 M1014.4,544.6 V549.6"/></g>
</svg>
<!-- bottom header -->
<div class="a" style="left:841px;top:562px;width:3px;height:13px;border-radius:1.5px;background:#4a4a4a"></div>
<div class="a" style="left:849px;top:562.5px;width:23px;height:13.5px;border-radius:3px;background:#3a3a3a"></div>
<div class="t j" style="left:852px;top:564.9px;font-size:7.4px;letter-spacing:1.1px;color:#e4e4e4;-webkit-text-stroke:0.3px currentColor">変形</div>
<div class="t j" style="left:876.5px;top:564.5px;font-size:8px;letter-spacing:-1.03px;color:#bdbdbd;-webkit-text-stroke:0.25px currentColor">ナビゲータ</div>
<div class="t j" style="left:921px;top:564.9px;font-size:7.4px;letter-spacing:0.79px;color:#bdbdbd;-webkit-text-stroke:0.3px currentColor">履歴</div>
<div class="a" style="left:1006px;top:563px;width:11.5px;height:11.5px;border-radius:2.5px;background:#161616;border:1px solid #5a5a5a"></div>
<svg class="a" style="left:1006px;top:563px" width="12" height="12" viewBox="0 0 12 12" fill="none" stroke="#e0e0e0" stroke-width="1.3"><path d="M3.4,4.8 L6,7.4 L8.6,4.8"/></svg>

</body></html>
